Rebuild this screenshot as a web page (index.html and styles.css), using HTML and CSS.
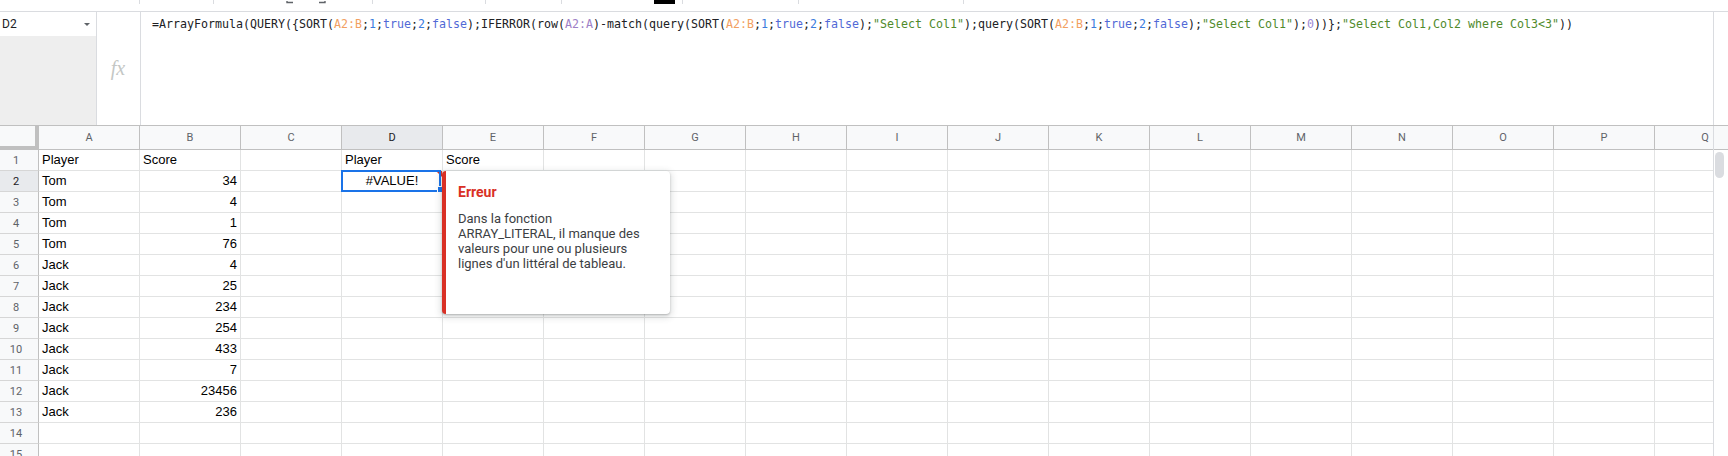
FILE: index.html
```html
<!DOCTYPE html>
<html lang="fr">
<head>
<meta charset="utf-8">
<title>Sheets</title>
<link rel="stylesheet" href="styles.css">
</head>
<body>
<div class="tb-edge">
  <div></div>
  <div class="tsep"></div>
  <div class="tsep"></div>
  <div class="tarrow"><svg width="8" height="4" viewBox="0 0 8 4"><path d="M1 0v1.5h6M1 0" fill="none" stroke="#5f6368" stroke-width="1.4"/></svg></div>
  <div class="tarrow"><svg width="8" height="4" viewBox="0 0 8 4"><path d="M7 0v1.5H1" fill="none" stroke="#5f6368" stroke-width="1.4"/></svg></div>
  <div class="tsep"></div>
  <div class="tsep"></div>
  <div class="tsep"></div>
  <div class="tcolor"></div>
  <div class="tsep"></div>
  <div class="tsep"></div>
  <div class="tsep"></div>
</div>

<div class="fbar">
  <div class="namebox">
    <div class="nb-top"><span class="nb-ref">D2</span><span class="nb-caret"></span></div>
    <div class="nb-fill"></div>
  </div>
  <div class="fx">fx</div>
  <div class="ftext"><span class="t">=ArrayFormula(QUERY({SORT(</span><span class="r1">A2:B</span><span class="t">;</span><span class="nu">1</span><span class="t">;</span><span class="bo">true</span><span class="t">;</span><span class="nu">2</span><span class="t">;</span><span class="bo">false</span><span class="t">);IFERROR(row(</span><span class="r2">A2:A</span><span class="t">)-match(query(SORT(</span><span class="r1">A2:B</span><span class="t">;</span><span class="nu">1</span><span class="t">;</span><span class="bo">true</span><span class="t">;</span><span class="nu">2</span><span class="t">;</span><span class="bo">false</span><span class="t">);</span><span class="st">"Select Col1"</span><span class="t">);query(SORT(</span><span class="r1">A2:B</span><span class="t">;</span><span class="nu">1</span><span class="t">;</span><span class="bo">true</span><span class="t">;</span><span class="nu">2</span><span class="t">;</span><span class="bo">false</span><span class="t">);</span><span class="st">"Select Col1"</span><span class="t">);</span><span class="ze">0</span><span class="t">))};</span><span class="st">"Select Col1,Col2 where Col3&lt;3"</span><span class="t">))</span></div>
  <div class="fright"></div>
</div>

<div class="grid-wrap">
  <div class="sheet">
    <div class="row hrow">
      <div class="corner"></div>
      <div class="ch">A</div><div class="ch">B</div><div class="ch">C</div><div class="ch ch-sel">D</div><div class="ch">E</div><div class="ch">F</div><div class="ch">G</div><div class="ch">H</div><div class="ch">I</div><div class="ch">J</div><div class="ch">K</div><div class="ch">L</div><div class="ch">M</div><div class="ch">N</div><div class="ch">O</div><div class="ch">P</div><div class="ch">Q</div>
    </div>
    <div class="row">
      <div class="rh">1</div>
      <div class="c">Player</div><div class="c">Score</div><div class="c"></div><div class="c">Player</div><div class="c">Score</div>
      <div class="c"></div><div class="c"></div><div class="c"></div><div class="c"></div><div class="c"></div><div class="c"></div><div class="c"></div><div class="c"></div><div class="c"></div><div class="c"></div><div class="c"></div><div class="c"></div>
    </div>
    <div class="row">
      <div class="rh rh-sel">2</div>
      <div class="c">Tom</div><div class="c num">34</div><div class="c"></div>
      <div class="c ctr active">#VALUE!
        <span class="err-tri"></span>
        <span class="selbox"></span>
        <span class="handle"></span>
        <div class="tip">
          <div class="tip-title">Erreur</div>
          <div class="tip-body">Dans la fonction<br>ARRAY_LITERAL, il manque des<br>valeurs pour une ou plusieurs<br>lignes d'un littéral de tableau.</div>
        </div>
      </div>
      <div class="c"></div><div class="c"></div><div class="c"></div><div class="c"></div><div class="c"></div><div class="c"></div><div class="c"></div><div class="c"></div><div class="c"></div><div class="c"></div><div class="c"></div><div class="c"></div><div class="c"></div>
    </div>
    <div class="row">
      <div class="rh">3</div>
      <div class="c">Tom</div><div class="c num">4</div>
      <div class="c"></div><div class="c"></div><div class="c"></div><div class="c"></div><div class="c"></div><div class="c"></div><div class="c"></div><div class="c"></div><div class="c"></div><div class="c"></div><div class="c"></div><div class="c"></div><div class="c"></div><div class="c"></div><div class="c"></div>
    </div>
    <div class="row">
      <div class="rh">4</div>
      <div class="c">Tom</div><div class="c num">1</div>
      <div class="c"></div><div class="c"></div><div class="c"></div><div class="c"></div><div class="c"></div><div class="c"></div><div class="c"></div><div class="c"></div><div class="c"></div><div class="c"></div><div class="c"></div><div class="c"></div><div class="c"></div><div class="c"></div><div class="c"></div>
    </div>
    <div class="row">
      <div class="rh">5</div>
      <div class="c">Tom</div><div class="c num">76</div>
      <div class="c"></div><div class="c"></div><div class="c"></div><div class="c"></div><div class="c"></div><div class="c"></div><div class="c"></div><div class="c"></div><div class="c"></div><div class="c"></div><div class="c"></div><div class="c"></div><div class="c"></div><div class="c"></div><div class="c"></div>
    </div>
    <div class="row">
      <div class="rh">6</div>
      <div class="c">Jack</div><div class="c num">4</div>
      <div class="c"></div><div class="c"></div><div class="c"></div><div class="c"></div><div class="c"></div><div class="c"></div><div class="c"></div><div class="c"></div><div class="c"></div><div class="c"></div><div class="c"></div><div class="c"></div><div class="c"></div><div class="c"></div><div class="c"></div>
    </div>
    <div class="row">
      <div class="rh">7</div>
      <div class="c">Jack</div><div class="c num">25</div>
      <div class="c"></div><div class="c"></div><div class="c"></div><div class="c"></div><div class="c"></div><div class="c"></div><div class="c"></div><div class="c"></div><div class="c"></div><div class="c"></div><div class="c"></div><div class="c"></div><div class="c"></div><div class="c"></div><div class="c"></div>
    </div>
    <div class="row">
      <div class="rh">8</div>
      <div class="c">Jack</div><div class="c num">234</div>
      <div class="c"></div><div class="c"></div><div class="c"></div><div class="c"></div><div class="c"></div><div class="c"></div><div class="c"></div><div class="c"></div><div class="c"></div><div class="c"></div><div class="c"></div><div class="c"></div><div class="c"></div><div class="c"></div><div class="c"></div>
    </div>
    <div class="row">
      <div class="rh">9</div>
      <div class="c">Jack</div><div class="c num">254</div>
      <div class="c"></div><div class="c"></div><div class="c"></div><div class="c"></div><div class="c"></div><div class="c"></div><div class="c"></div><div class="c"></div><div class="c"></div><div class="c"></div><div class="c"></div><div class="c"></div><div class="c"></div><div class="c"></div><div class="c"></div>
    </div>
    <div class="row">
      <div class="rh">10</div>
      <div class="c">Jack</div><div class="c num">433</div>
      <div class="c"></div><div class="c"></div><div class="c"></div><div class="c"></div><div class="c"></div><div class="c"></div><div class="c"></div><div class="c"></div><div class="c"></div><div class="c"></div><div class="c"></div><div class="c"></div><div class="c"></div><div class="c"></div><div class="c"></div>
    </div>
    <div class="row">
      <div class="rh">11</div>
      <div class="c">Jack</div><div class="c num">7</div>
      <div class="c"></div><div class="c"></div><div class="c"></div><div class="c"></div><div class="c"></div><div class="c"></div><div class="c"></div><div class="c"></div><div class="c"></div><div class="c"></div><div class="c"></div><div class="c"></div><div class="c"></div><div class="c"></div><div class="c"></div>
    </div>
    <div class="row">
      <div class="rh">12</div>
      <div class="c">Jack</div><div class="c num">23456</div>
      <div class="c"></div><div class="c"></div><div class="c"></div><div class="c"></div><div class="c"></div><div class="c"></div><div class="c"></div><div class="c"></div><div class="c"></div><div class="c"></div><div class="c"></div><div class="c"></div><div class="c"></div><div class="c"></div><div class="c"></div>
    </div>
    <div class="row">
      <div class="rh">13</div>
      <div class="c">Jack</div><div class="c num">236</div>
      <div class="c"></div><div class="c"></div><div class="c"></div><div class="c"></div><div class="c"></div><div class="c"></div><div class="c"></div><div class="c"></div><div class="c"></div><div class="c"></div><div class="c"></div><div class="c"></div><div class="c"></div><div class="c"></div><div class="c"></div>
    </div>
    <div class="row">
      <div class="rh">14</div>
      <div class="c"></div><div class="c"></div><div class="c"></div><div class="c"></div><div class="c"></div><div class="c"></div><div class="c"></div><div class="c"></div><div class="c"></div><div class="c"></div><div class="c"></div><div class="c"></div><div class="c"></div><div class="c"></div><div class="c"></div><div class="c"></div><div class="c"></div>
    </div>
    <div class="row">
      <div class="rh">15</div>
      <div class="c"></div><div class="c"></div><div class="c"></div><div class="c"></div><div class="c"></div><div class="c"></div><div class="c"></div><div class="c"></div><div class="c"></div><div class="c"></div><div class="c"></div><div class="c"></div><div class="c"></div><div class="c"></div><div class="c"></div><div class="c"></div><div class="c"></div>
    </div>
  </div>
  <div class="vscroll">
    <div class="vs-head"></div>
    <div class="vs-thumb"></div>
  </div>
</div>
</body>
</html>
```

FILE: styles.css
```css
* { box-sizing: border-box; }

html, body {
  margin: 0;
  padding: 0;
  background: #ffffff;
}

body {
  width: 1728px;
  height: 456px;
  overflow: hidden;
  font-family: Roboto, "Liberation Sans", Arial, sans-serif;
  color: #202124;
}

/* remnant of the toolbar above the formula bar */
.tb-edge {
  height: 11px;
  display: grid;
  grid-template-columns: 139px 74px 77px 32px 50px 113px 76px 93px 28px 116px 165px 1fr;
  align-items: start;
}

.tsep {
  width: 1px;
  height: 4px;
  background: #dadce0;
}

.tarrow {
  height: 4px;
  line-height: 0;
  margin-left: -4px;
}

.tcolor {
  width: 21px;
  height: 4px;
  background: #000000;
}

/* formula bar */
.fbar {
  display: flex;
  height: 115px;
  border-top: 1px solid #dadce0;
  border-bottom: 1px solid #c0c0c0;
}

.namebox {
  width: 97px;
  border-right: 1px solid #dadce0;
  display: flex;
  flex-direction: column;
}

.nb-top {
  height: 24px;
  display: flex;
  align-items: center;
  justify-content: space-between;
  padding: 0 6px 0 2px;
  background: #ffffff;
}

.nb-ref {
  font-family: Roboto, "Liberation Sans", sans-serif;
  font-size: 12px;
  color: #202124;
}

.nb-caret {
  width: 0;
  height: 0;
  border-left: 3.5px solid transparent;
  border-right: 3.5px solid transparent;
  border-top: 3.5px solid #5f6368;
  margin-top: 1px;
}

.nb-fill {
  flex: 1;
  background: #eeeeee;
}

.fx {
  width: 44px;
  border-right: 1px solid #dadce0;
  display: flex;
  align-items: center;
  justify-content: center;
  font-family: "Liberation Serif", "DejaVu Serif", serif;
  font-style: italic;
  font-size: 20px;
  color: #c4c7c5;
  padding-right: 1px;
}

.ftext {
  width: 1573px;
  border-right: 1px solid #dadce0;
  padding: 4px 0 0 11px;
  font-family: "DejaVu Sans Mono", "Liberation Mono", monospace;
  font-size: 11.63px;
  line-height: 16px;
  white-space: nowrap;
  overflow: hidden;
}

.fright { flex: 1; }

.t  { color: #202124; }
.r1 { color: #f2a062; }
.r2 { color: #9d7fc6; }
.nu { color: #3b7ddd; }
.bo { color: #5169d6; }
.st { color: #4f8a2b; }
.ze { color: #9c8ad4; }

/* grid */
.grid-wrap {
  display: flex;
  height: 330px;
}

.sheet {
  width: 1713px;
  overflow: hidden;
  position: relative;
}

.row {
  display: flex;
  height: 21px;
}

.hrow {
  height: 24px;
}

.corner {
  flex: 0 0 39px;
  height: 24px;
  background: #f8f9fa;
  border-right: 4px solid #c0c0c0;
  border-bottom: 4px solid #c0c0c0;
}

.ch {
  flex: 0 0 101px;
  height: 24px;
  background: #f8f9fa;
  border-right: 1px solid #c0c0c0;
  border-bottom: 1px solid #c0c0c0;
  display: flex;
  align-items: center;
  justify-content: center;
  font-size: 11px;
  color: #5f6368;
}

.ch-sel {
  background: #e8eaed;
  color: #202124;
}

.rh {
  flex: 0 0 39px;
  height: 21px;
  background: #f8f9fa;
  border-right: 1px solid #c0c0c0;
  border-bottom: 1px solid #d6d6d6;
  display: flex;
  align-items: center;
  justify-content: center;
  padding-right: 6px;
  font-size: 11px;
  color: #5f6368;
}

.rh-sel {
  background: #e8eaed;
  color: #202124;
}

.c {
  flex: 0 0 101px;
  height: 21px;
  border-right: 1px solid #e2e3e3;
  border-bottom: 1px solid #e2e3e3;
  padding: 0 3px;
  font-family: "Liberation Sans", Arial, sans-serif;
  font-size: 13px;
  line-height: 20px;
  color: #000000;
  white-space: nowrap;
}

.num { text-align: right; }
.ctr { text-align: center; }

.active {
  position: relative;
  overflow: visible;
}

.err-tri {
  position: absolute;
  top: 0;
  right: 0;
  width: 0;
  height: 0;
  border-top: 6px solid #d93025;
  border-left: 6px solid transparent;
}

.selbox {
  position: absolute;
  left: -1px;
  top: -1px;
  width: 100px;
  height: 22px;
  border: 2px solid #1a73e8;
}

.handle {
  position: absolute;
  left: 95px;
  top: 15px;
  width: 7px;
  height: 7px;
  background: #1a73e8;
  border: 1px solid #ffffff;
}

/* error tooltip */
.tip {
  position: absolute;
  left: 100%;
  top: 0;
  z-index: 5;
  width: 228px;
  height: 143px;
  background: #ffffff;
  border-left: 4px solid #d93025;
  border-radius: 4px;
  box-shadow: 0 1px 2px rgba(60, 64, 67, 0.3), 0 2px 6px 2px rgba(60, 64, 67, 0.15);
  padding: 11px 12px 0 12px;
  text-align: left;
  white-space: nowrap;
}

.tip-title {
  font-family: Roboto, "Liberation Sans", sans-serif;
  font-weight: 700;
  font-size: 14px;
  line-height: 20px;
  color: #d93025;
}

.tip-body {
  margin-top: 9px;
  font-family: Roboto, "Liberation Sans", sans-serif;
  font-size: 13px;
  line-height: 15px;
  color: #3c4043;
}

/* vertical scrollbar */
.vscroll {
  width: 15px;
  border-left: 1px solid #dadce0;
  display: flex;
  flex-direction: column;
}

.vs-head {
  height: 24px;
  background: #f8f9fa;
  border-bottom: 1px solid #c0c0c0;
}

.vs-thumb {
  margin: 2px 0 0 1px;
  width: 9px;
  height: 26px;
  border-radius: 5px;
  background: #dadce0;
}
```
